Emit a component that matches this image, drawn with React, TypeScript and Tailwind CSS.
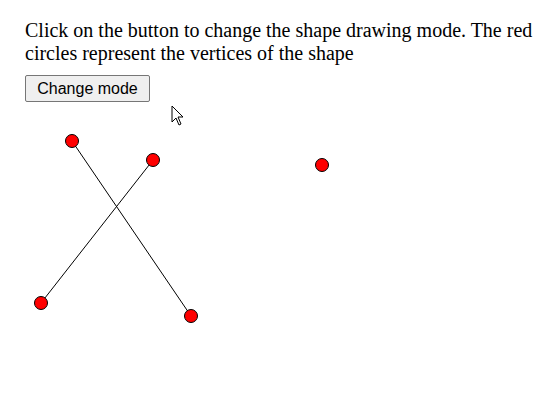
import React from 'react';

const vertices = [
  { x: 47, y: 31 },
  { x: 128, y: 50 },
  { x: 16, y: 193 },
  { x: 166, y: 206 },
  { x: 297, y: 55 },
];

export default function App() {
  return (
    <div className="relative min-h-[413px] w-[560px] bg-white pl-[25px] pt-[19px] overflow-hidden">
      <p className="w-[520px] text-[20px] leading-[23px] text-black" style={{ fontFamily: '"Liberation Serif", "Times New Roman", serif' }}>
        Click on the button to change the shape drawing mode. The red circles represent the vertices of the shape
      </p>

      <button
        className="mt-[10px] h-[27px] w-[125px] rounded-[2px] border border-[#767676] bg-[#efefef] text-[16px] text-black"
        style={{ fontFamily: '"Liberation Sans", Arial, sans-serif' }}
      >
        Change mode
      </button>

      {/* canvas drawing */}
      <svg width="535" height="300" className="mt-[8px] block">
        <line x1={47} y1={31} x2={166} y2={206} stroke="#000" strokeWidth={1} />
        <line x1={128} y1={50} x2={16} y2={193} stroke="#000" strokeWidth={1} />
        {vertices.map((v, i) => (
          <circle key={i} cx={v.x} cy={v.y} r={6.5} fill="#ff0000" stroke="#000" strokeWidth={1} />
        ))}
      </svg>

      {/* mouse pointer */}
      <svg width="14" height="22" viewBox="0 0 14 22" className="absolute left-[171px] top-[105px]">
        <path d="M1 1 L1 17 L5 13 L8 20 L10 19 L7 12 L12 12 Z" fill="#fff" stroke="#000" strokeWidth={1} strokeLinejoin="round" />
      </svg>
    </div>
  );
}
